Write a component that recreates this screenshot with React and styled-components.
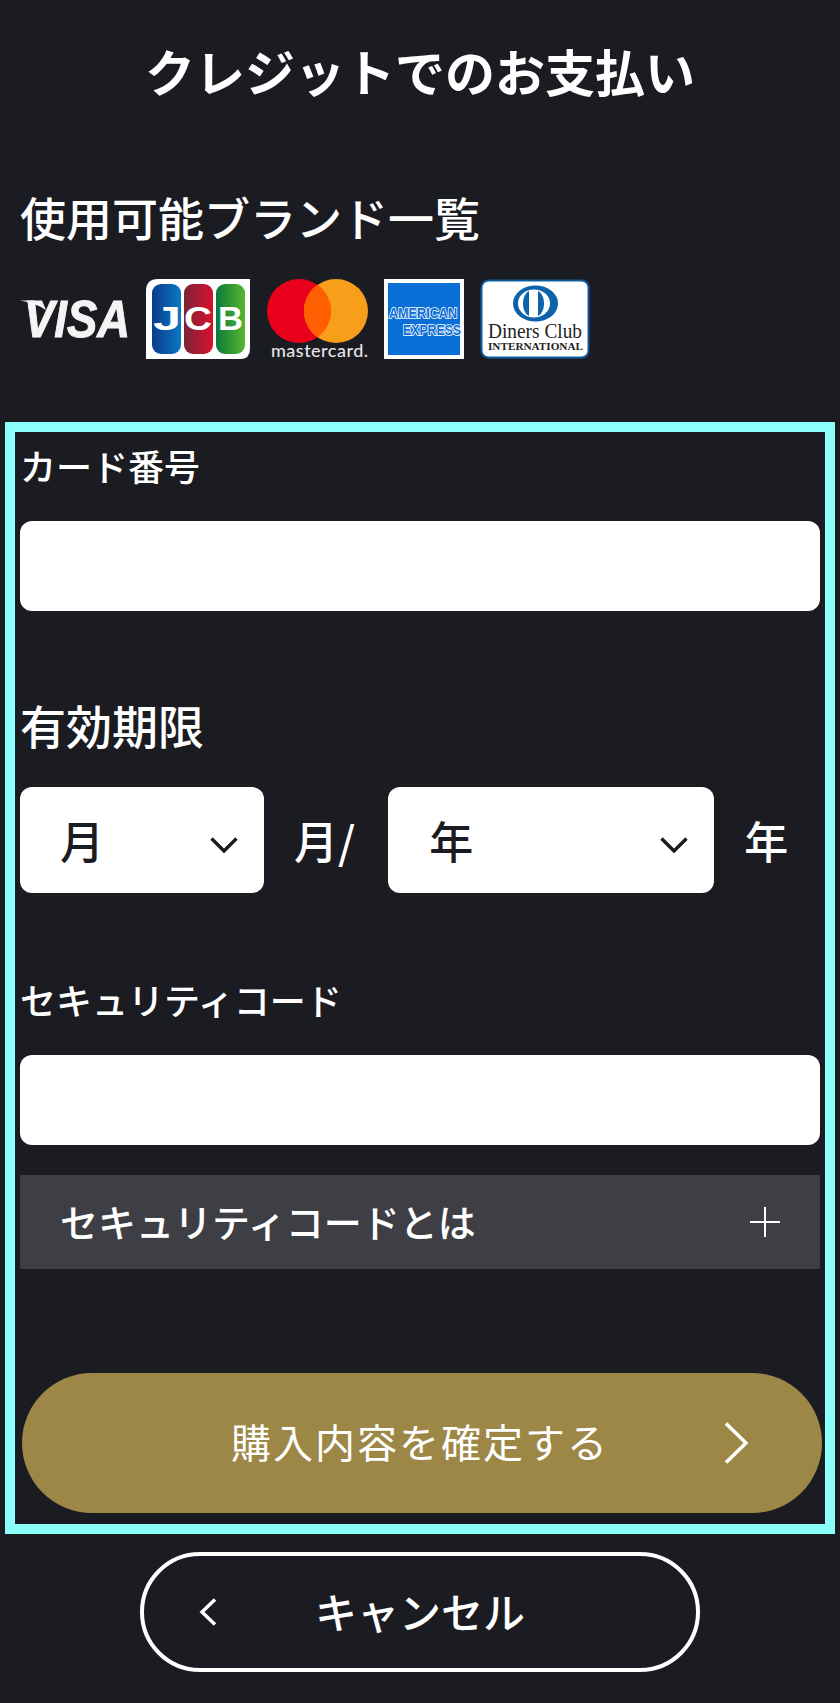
import React from 'react';
import styled, { createGlobalStyle } from 'styled-components';

const GlobalStyle = createGlobalStyle`
  html, body {
    margin: 0;
    padding: 0;
    background: #1b1c22;
  }
  * {
    box-sizing: border-box;
  }
`;

const Page = styled.div`
  width: 840px;
  height: 1703px;
  padding: 0 5px;
  background: #1b1c22;
  color: #fff;
  font-family: 'Noto Sans CJK JP', 'Noto Sans', sans-serif;
`;

const Title = styled.h1`
  margin: 0;
  height: 144px;
  font-size: 50px;
  line-height: 141px;
  font-weight: 700;
  text-align: center;
`;

const Heading = styled.h2`
  margin: ${(p) => p.$top || 0}px 0 0;
  padding-left: ${(p) => p.$left || 0}px;
  height: 70px;
  font-size: 46px;
  line-height: 66px;
  font-weight: 500;
  white-space: nowrap;
`;

const BrandRow = styled.div`
  display: flex;
  align-items: flex-start;
  gap: 16px;
  margin-top: 26px;
  padding-left: 15px;
  height: 80px;
`;

const Panel = styled.form`
  margin-top: 63px;
  height: 1112px;
  padding: 0 5px;
  border: 10px solid #8bfff9;
  display: flex;
  flex-direction: column;
`;

const Label = styled.label`
  display: block;
  margin-top: ${(p) => p.$top || 0}px;
  height: 70px;
  font-size: 36px;
  line-height: 66px;
  font-weight: 500;
  white-space: nowrap;
`;

const TextInput = styled.input`
  display: block;
  width: 800px;
  height: 90px;
  margin-top: 19px;
  border: none;
  border-radius: 12px;
  background: #fff;
  outline: none;
`;

const ExpiryRow = styled.div`
  display: flex;
  align-items: center;
  margin-top: 26px;
  height: 106px;
`;

const SelectBox = styled.div`
  position: relative;
  width: ${(p) => p.$width}px;
  height: 106px;
`;

const Select = styled.select`
  appearance: none;
  width: 100%;
  height: 100%;
  padding: 0 0 0 ${(p) => p.$pad}px;
  border: none;
  border-radius: 12px;
  background: #fff;
  color: #1b1c22;
  font-family: inherit;
  font-size: 44px;
  font-weight: 500;
  outline: none;
`;

const SelectChevron = styled.svg`
  position: absolute;
  top: 50px;
  right: 26px;
  width: 28px;
  height: 16px;
`;

const Unit = styled.span`
  font-size: 44px;
  font-weight: 500;
  line-height: 106px;
  white-space: nowrap;
  margin-left: ${(p) => p.$left}px;
  margin-right: ${(p) => p.$right || 0}px;
`;

const Accordion = styled.div`
  display: flex;
  align-items: center;
  justify-content: space-between;
  width: 800px;
  height: 94px;
  margin-top: 30px;
  padding: 0 40px;
  background: #3e3f44;
  font-size: 38px;
  font-weight: 500;
  white-space: nowrap;
`;

const AccordionText = styled.span`
  margin-bottom: 3px;
`;

const PlusIcon = styled.svg`
  width: 30px;
  height: 30px;
  flex: none;
`;

const SubmitButton = styled.button`
  position: relative;
  display: block;
  width: 800px;
  height: 140px;
  margin: 104px 0 0 2px;
  padding: 0 4px 4px 0;
  border: none;
  border-radius: 70px;
  background: #9d8747;
  color: #fff;
  font-family: inherit;
  font-size: 40px;
  font-weight: 400;
  letter-spacing: 2px;
`;

const SubmitChevron = styled.svg`
  position: absolute;
  top: 49px;
  right: 74px;
  width: 24px;
  height: 42px;
`;

const CancelButton = styled.button`
  position: relative;
  display: block;
  width: 560px;
  height: 120px;
  margin: 18px 0 0 135px;
  padding: 0 0 3px;
  border: 4px solid #fff;
  border-radius: 60px;
  background: transparent;
  color: #fff;
  font-family: inherit;
  font-size: 42px;
  font-weight: 500;
`;

const CancelChevron = styled.svg`
  position: absolute;
  top: 42px;
  left: 55px;
  width: 18px;
  height: 28px;
`;

const Logo = styled.svg`
  display: block;
  flex: none;
  overflow: visible;
`;

const VisaLogo = () => (
  <Logo width="110" height="80" viewBox="0 0 110 80">
    <path d="M0 21.5 H22 L26 31 C18 26 10 23 0 21.5Z" fill="#f4f4f4" />
    <text x="4" y="58" fontFamily="Liberation Sans" fontSize="51" fontWeight="700" fontStyle="italic" fill="#f4f4f4" stroke="#f4f4f4" strokeWidth="1" textLength="106" lengthAdjust="spacingAndGlyphs">VISA</text>
  </Logo>
);

const JcbLogo = () => (
  <Logo width="104" height="80" viewBox="0 0 104 80">
    <defs>
      <linearGradient id="jcbBlue" x1="0" x2="1" y1="0" y2="0">
        <stop offset="0" stopColor="#0b3c8c" />
        <stop offset="1" stopColor="#0a78c2" />
      </linearGradient>
      <linearGradient id="jcbRed" x1="0" x2="1" y1="0" y2="0">
        <stop offset="0" stopColor="#7a2437" />
        <stop offset="1" stopColor="#d8112f" />
      </linearGradient>
      <linearGradient id="jcbGreen" x1="0" x2="1" y1="0" y2="0">
        <stop offset="0" stopColor="#0b7a3c" />
        <stop offset="1" stopColor="#57b62f" />
      </linearGradient>
    </defs>
    <path d="M12 0 H104 V70 Q104 80 94 80 H0 V12 Q0 0 12 0Z" fill="#fff" />
    <rect x="6" y="5" width="29" height="70" rx="9" fill="url(#jcbBlue)" />
    <rect x="38" y="5" width="29" height="70" rx="9" fill="url(#jcbRed)" />
    <rect x="70" y="5" width="29" height="70" rx="9" fill="url(#jcbGreen)" />
    <g fontFamily="Liberation Sans" fontWeight="700" fontSize="33" fill="#fff">
      <text x="7" y="51" textLength="28" lengthAdjust="spacingAndGlyphs">J</text>
      <text x="38" y="51" textLength="28" lengthAdjust="spacingAndGlyphs">C</text>
      <text x="72" y="51" textLength="25" lengthAdjust="spacingAndGlyphs">B</text>
    </g>
  </Logo>
);

const MastercardLogo = () => (
  <Logo width="102" height="80" viewBox="0 0 102 80">
    <circle cx="33" cy="32" r="32" fill="#eb001b" />
    <circle cx="70" cy="32" r="32" fill="#f79e1b" />
    <path d="M51.5 5.8 A32 32 0 0 1 51.5 58.2 A32 32 0 0 1 51.5 5.8Z" fill="#ff5f00" />
    <text x="5" y="78" fontFamily="Lato" fontSize="18" fontWeight="500" fill="#e6e6e6" textLength="97">mastercard.</text>
  </Logo>
);

const AmexLogo = () => (
  <Logo width="80" height="80" viewBox="0 0 80 80">
    <rect width="80" height="80" fill="#fff" />
    <rect x="4" y="4" width="72" height="72" fill="#0a6fd6" />
    <g fontFamily="Liberation Sans" fontWeight="700" fontSize="14" fill="#0a6fd6" stroke="#fff" strokeWidth="1.6" paintOrder="stroke">
      <text x="5" y="39" textLength="68" lengthAdjust="spacingAndGlyphs">AMERICAN</text>
      <text x="19" y="56" textLength="58" lengthAdjust="spacingAndGlyphs">EXPRESS</text>
    </g>
  </Logo>
);

const DinersLogo = () => (
  <Logo width="110" height="80" viewBox="0 0 110 80">
    <rect x="1.5" y="1.5" width="107" height="77" rx="7" fill="#fff" stroke="#0d5c9e" strokeWidth="2" />
    <ellipse cx="55.5" cy="24.5" rx="22.5" ry="18" fill="#0d62ab" />
    <ellipse cx="54" cy="24.5" rx="16" ry="14" fill="#fff" />
    <path d="M49 12 C41 16 41 33 49 37 Z" fill="#0d62ab" />
    <path d="M58 12 C66 16 66 33 58 37 Z" fill="#0d62ab" />
    <text x="8" y="59" fontFamily="Liberation Serif" fontSize="22" fill="#222" textLength="94" lengthAdjust="spacingAndGlyphs">Diners Club</text>
    <text x="8" y="71" fontFamily="Liberation Serif" fontSize="10" fontWeight="700" fill="#222" textLength="95" lengthAdjust="spacingAndGlyphs">INTERNATIONAL</text>
  </Logo>
);

const DownChevron = () => (
  <SelectChevron viewBox="0 0 28 16">
    <path d="M1.5 1.5 L14 14 L26.5 1.5" fill="none" stroke="#1b1c22" strokeWidth="3.4" />
  </SelectChevron>
);

export default function App() {
  return (
    <Page>
      <GlobalStyle />
      <Title>クレジットでのお支払い</Title>
      <Heading $top={39} $left={15}>使用可能ブランド一覧</Heading>
      <BrandRow>
        <VisaLogo />
        <JcbLogo />
        <MastercardLogo />
        <AmexLogo />
        <DinersLogo />
      </BrandRow>
      <Panel onSubmit={(e) => e.preventDefault()}>
        <Label htmlFor="card">カード番号</Label>
        <TextInput id="card" type="text" />
        <Heading as="div" $top={80}>有効期限</Heading>
        <ExpiryRow>
          <SelectBox $width={244}>
            <Select $pad={40} aria-label="月"><option>月</option></Select>
            <DownChevron />
          </SelectBox>
          <Unit $left={30} $right={33}>月/</Unit>
          <SelectBox $width={326}>
            <Select $pad={41} aria-label="年"><option>年</option></Select>
            <DownChevron />
          </SelectBox>
          <Unit $left={30}>年</Unit>
        </ExpiryRow>
        <Label htmlFor="code" $top={73}>セキュリティコード</Label>
        <TextInput id="code" type="text" />
        <Accordion>
          <AccordionText>セキュリティコードとは</AccordionText>
          <PlusIcon viewBox="0 0 30 30">
            <path d="M15 0 V30 M0 15 H30" fill="none" stroke="#fff" strokeWidth="2" />
          </PlusIcon>
        </Accordion>
        <SubmitButton type="submit">
          購入内容を確定する
          <SubmitChevron viewBox="0 0 24 42">
            <path d="M2 1.5 L22 21 L2 40.5" fill="none" stroke="#fff" strokeWidth="3.6" />
          </SubmitChevron>
        </SubmitButton>
      </Panel>
      <CancelButton type="button">
        キャンセル
        <CancelChevron viewBox="0 0 18 28">
          <path d="M16 1.5 L3 14 L16 26.5" fill="none" stroke="#fff" strokeWidth="3.4" />
        </CancelChevron>
      </CancelButton>
    </Page>
  );
}
